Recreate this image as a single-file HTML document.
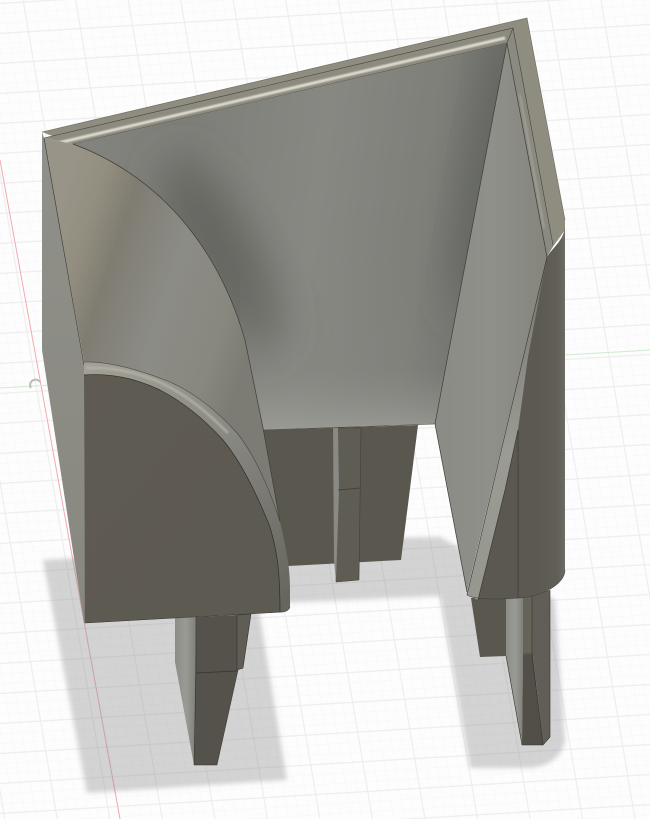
<!DOCTYPE html>
<html><head><meta charset="utf-8"><title>3D model</title>
<style>html,body{margin:0;padding:0;background:#fdfdfd}svg{display:block}</style></head>
<body>
<svg width="650" height="819" viewBox="0 0 650 819" xmlns="http://www.w3.org/2000/svg">
<defs>
<pattern id="minor" width="10.4" height="9.9" patternUnits="userSpaceOnUse" patternTransform="matrix(1 -0.06 0.17 1 23.4 2)">
<path d="M0 0V9.9M0 0H10.4" stroke="#f7f7f7" stroke-width="1.2" fill="none"/>
</pattern>
<pattern id="major" width="52" height="29.7" patternUnits="userSpaceOnUse" patternTransform="matrix(1 -0.06 0.17 1 23.4 2)">
<path d="M0 0V29.7M52 0V29.7M0 0H52M0 29.7H52" stroke="#ededed" stroke-width="1.1" fill="none"/>
</pattern>
<filter id="b2"><feGaussianBlur stdDeviation="2.5"/></filter>
<filter id="b1"><feGaussianBlur stdDeviation=".7"/></filter>
<filter id="b20" x="-50%" y="-50%" width="200%" height="200%"><feGaussianBlur stdDeviation="22"/></filter>
<linearGradient id="wall" x1="0" y1="0" x2="1" y2="0.12">
<stop offset="0" stop-color="#84847f"/><stop offset=".3" stop-color="#7f7f7a"/><stop offset=".6" stop-color="#888883"/><stop offset=".85" stop-color="#7e7f79"/><stop offset="1" stop-color="#6d6e69"/>
</linearGradient>
<linearGradient id="wallV" x1="0" y1="0" x2="0" y2="1">
<stop offset="0" stop-color="#8c8c87" stop-opacity="0"/><stop offset=".6" stop-color="#8c8c87" stop-opacity=".2"/><stop offset="1" stop-color="#a0a09b" stop-opacity=".95"/>
</linearGradient>
<linearGradient id="curve" gradientUnits="userSpaceOnUse" x1="50" y1="230" x2="265" y2="300">
<stop offset="0" stop-color="#989488"/><stop offset=".14" stop-color="#948f80"/><stop offset=".3" stop-color="#7f7c72"/><stop offset=".58" stop-color="#8c8c86"/><stop offset=".85" stop-color="#88887f"/><stop offset="1" stop-color="#7c7c74"/>
</linearGradient>
<linearGradient id="side" x1="0" y1="0" x2="0" y2="1">
<stop offset="0" stop-color="#90908a"/><stop offset="1" stop-color="#888880"/>
</linearGradient>
<linearGradient id="wing" x1="0" y1="0" x2="1" y2="0">
<stop offset="0" stop-color="#8a8b85"/><stop offset=".5" stop-color="#8f908a"/><stop offset="1" stop-color="#85857d"/>
</linearGradient>
<linearGradient id="rib" gradientUnits="userSpaceOnUse" x1="84" y1="362" x2="290" y2="600">
<stop offset="0" stop-color="#a3a195"/><stop offset=".45" stop-color="#8a8a84"/><stop offset="1" stop-color="#66655e"/>
</linearGradient>
<linearGradient id="ribR" gradientUnits="userSpaceOnUse" x1="470" y1="595" x2="546" y2="270">
<stop offset="0" stop-color="#96978e"/><stop offset=".45" stop-color="#9a9b92"/><stop offset="1" stop-color="#77776f"/>
</linearGradient>
<linearGradient id="rdark" x1="0" y1="0" x2="1" y2="0">
<stop offset="0" stop-color="#59574f"/><stop offset=".7" stop-color="#5b5951"/><stop offset=".93" stop-color="#615f58"/><stop offset="1" stop-color="#6d6c65"/>
</linearGradient>
<linearGradient id="lightleg" x1="0" y1="0" x2="1" y2="0">
<stop offset="0" stop-color="#8c8c86"/><stop offset=".5" stop-color="#9a9b94"/><stop offset="1" stop-color="#7d7d77"/>
</linearGradient>
<linearGradient id="face" x1="0" y1="0" x2="1" y2="1">
<stop offset="0" stop-color="#5f5b52"/><stop offset="1" stop-color="#5c5a51"/>
</linearGradient>
<clipPath id="wallc"><path d="M73 144L507 43L435 424L263 430L245 340C222 260 170 180 73 144Z"/></clipPath>
</defs>

<rect width="650" height="819" fill="#fdfdfd"/>
<rect width="650" height="819" fill="url(#minor)"/>
<rect width="650" height="819" fill="url(#major)"/>
<path d="M0 160L120 819" stroke="#f2a9b0" stroke-width="1" fill="none"/>
<path d="M0 388L650 350" stroke="#cfeacf" stroke-width="1" fill="none"/>
<path d="M31 388a5 5 0 0 1 9-6" stroke="#bdbdb8" stroke-width="2" fill="none"/>

<!-- shadow -->
<path d="M43 560L80 558L300 540L440 537L555 600L565 742C560 760 545 768 525 768L470 768L440 596L258 604L287 780L87 793Z" fill="#8f8f8f" fill-opacity=".38" filter="url(#b2)"/>

<!-- back legs -->
<path d="M263 430L418 425L401 560L288 566Z" fill="#5a574f"/>
<path d="M333 428H361L359 580L336 582Z" fill="#5e5c53" stroke="#3d3b35" stroke-width=".5"/>
<path d="M333 428H338L339 490L336 582L334 560Z" fill="#8a8a84"/>
<path d="M338 490L360 488" stroke="#3d3b35" stroke-width=".8"/>

<!-- front left leg -->
<path d="M175 618L197 617L196 765L194 765L175 662Z" fill="url(#lightleg)"/>
<path d="M196 617L237 615L238 670L217 765L194 765Z" fill="#55524b"/>
<path d="M237 615L251 614L243 668L237 670Z" fill="#5f5d55" stroke="#35332e" stroke-width=".6"/>
<path d="M196 673L237 671" stroke="#35332e" stroke-width=".8"/>
<path d="M196 617L196 673L194 765H217L238 670" fill="none" stroke="#35332e" stroke-width=".5"/>

<!-- right back leg -->
<path d="M471 598L506 596L506 656L480 657Z" fill="#5a574f"/>
<!-- right leg -->
<path d="M506 596L524 596L523 655L522 745L506 656Z" fill="url(#lightleg)"/>
<path d="M523 596L533 596V655H523Z" fill="#666459"/>
<path d="M523 655H533L543 745L522 745Z" fill="#524f49"/>
<path d="M532 595L550 590V737L543 745L533 655Z" fill="#605e56"/>
<path d="M523 654H533M532 596V655L543 745M522 745H543L550 737V590M506 656L522 745" fill="none" stroke="#35332e" stroke-width=".6"/>

<!-- top rim -->
<path d="M42 132L527 18L565 220V230C558 240 552 247 547 257L507 43L73 144Z" fill="#8f8c80"/>
<path d="M44 138L513 28L507 43L73 144Z" fill="#8d8b80"/>
<path d="M58 143L505 38" stroke="#dedbcf" stroke-width="3" fill="none" filter="url(#b1)"/>
<path d="M513 28L553 245L547 257L507 43Z" fill="#8b8a80"/>
<path d="M520 95L544 228" stroke="#a09f94" stroke-width="2" fill="none" filter="url(#b1)"/>
<path d="M44 138L513 28L553 245M73 144L507 43M513 28L507 43" fill="none" stroke="#44423b" stroke-width=".6"/>
<path d="M42 132L527 18L565 220" fill="none" stroke="#6d6b62" stroke-width=".6"/>

<!-- back wall -->
<path d="M73 144L507 43L435 424L263 430L245 340C222 260 170 180 73 144Z" fill="url(#wall)"/>
<g clip-path="url(#wallc)">
<ellipse cx="222" cy="255" rx="34" ry="110" transform="rotate(-28 222 255)" fill="#555650" filter="url(#b20)" fill-opacity=".65"/>
<ellipse cx="492" cy="170" rx="24" ry="150" transform="rotate(10 492 170)" fill="#5a5c57" filter="url(#b20)" fill-opacity=".65"/>
<rect x="240" y="260" width="220" height="180" fill="url(#wallV)"/>
</g>
<path d="M263 430L435 424" stroke="#4a4842" stroke-width=".5"/>

<!-- left side outer -->
<path d="M42 132L44 138L84 365V623L42 350Z" fill="url(#side)"/>
<!-- curved surface -->
<path d="M44 138L73 144C170 180 222 260 245 340L263 428L280 522L237 433C218 412 195 393 170 382C140 370 110 361 84 362Z" fill="url(#curve)"/>
<path d="M44 138L84 365M73 144C170 180 222 260 245 340L263 428L280 522" fill="none" stroke="#3f3d37" stroke-width=".7"/>

<!-- dark quarter face + ribbon -->
<path d="M84 362C110 361 140 370 170 382C195 393 218 412 237 433C255 455 270 490 280 522C286 548 290 565 290 590L290 607Q289 611 283 612L84 623Z" fill="url(#rib)"/>
<path d="M84 375C110 373 135 378 160 390C185 403 205 420 223 440C242 463 258 497 270 527C276 548 280 565 280 612L85 623L84 375Z" fill="url(#face)"/>
<path d="M84 375C110 373 135 378 160 390C185 403 205 420 223 440C242 463 258 497 270 527C276 548 280 565 280 612" fill="none" stroke="#2f2d28" stroke-width=".7"/>
<path d="M86 368C120 367 150 375 178 392C195 402 212 417 228 433" stroke="#b4b2a6" stroke-width="3" fill="none" opacity=".75" filter="url(#b1)"/>
<path d="M84 362C110 361 140 370 170 382C195 393 218 412 237 433C255 455 270 490 280 522" fill="none" stroke="#48463f" stroke-width=".6"/>
<path d="M85 623L283 612Q289 611 290 607" fill="none" stroke="#35332e" stroke-width=".5"/>

<!-- right wing -->
<path d="M507 43L547 257L467 592L435 424Z" fill="url(#wing)"/>
<path d="M507 43L435 424L467 592M507 43L547 257" fill="none" stroke="#3f3d37" stroke-width=".7"/>
<!-- right outer dark -->
<path d="M565 225C565 240 552 248 547 257L467 595C474 599 490 600 519 598C540 597 565 585 565 570Z" fill="url(#rdark)"/>
<path d="M547 257L492 490L467 595L478 600L505 490L518 430L528 357L543 277Z" fill="url(#ribR)"/>
<path d="M547 257L467 595M518 430L505 490L478 600M518 430V598" fill="none" stroke="#35332e" stroke-width=".6"/>
<path d="M467 595C474 599 490 600 519 598C540 597 565 585 565 570" fill="none" stroke="#3d3b35" stroke-width=".5"/>
</svg>
</body></html>
